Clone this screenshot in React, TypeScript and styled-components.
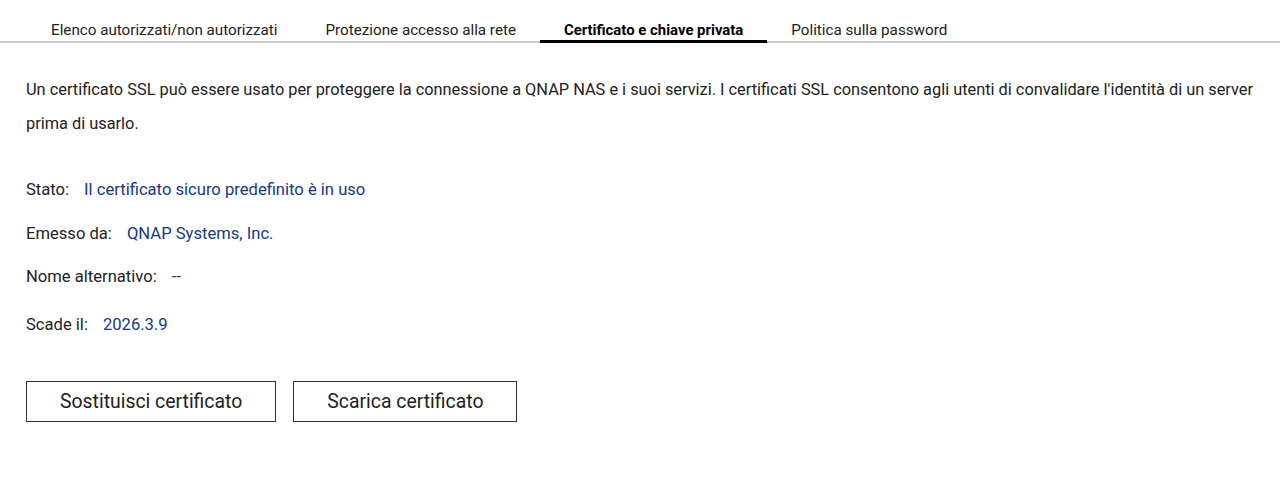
import React from "react";
import styled, { createGlobalStyle } from "styled-components";

const Global = createGlobalStyle`
  html, body { margin: 0; padding: 0; background: #fff; }
  body { font-family: Roboto, "Liberation Sans", Arial, sans-serif; color: #333; }
`;

const Page = styled.div`
  width: 1280px;
  height: 479px;
  background: #fff;
`;

const TabBar = styled.div`
  display: flex;
  padding-left: 27px;
  padding-top: 20px;
  border-bottom: 2px solid #c9c9c9;
  height: 21px;
`;

const Tab = styled.div<{ $active?: boolean }>`
  padding: 0 24px;
  font-size: ${(p) => (p.$active ? "14.9px" : "15.2px")};
  line-height: 20px;
  height: 21px;
  box-sizing: border-box;
  color: ${(p) => (p.$active ? "#000" : "#222")};
  font-weight: ${(p) => (p.$active ? 700 : 400)};
  position: relative;
  white-space: nowrap;
  &::after {
    content: "";
    display: ${(p) => (p.$active ? "block" : "none")};
    position: absolute;
    left: 0;
    right: 0;
    bottom: -2px;
    height: 3px;
    background: #000;
  }
`;

const Content = styled.div`
  padding: 30px 26px 0 26px;
`;

const Intro = styled.p`
  margin: 0;
  font-size: 16.35px;
  line-height: 34px;
  color: #222;
`;

const Info = styled.div`
  display: flex;
  flex-direction: column;
  margin-top: 39px;
`;

const Row = styled.div<{ $mt: number }>`
  display: flex;
  gap: 15px;
  font-size: 16.6px;
  line-height: 20px;
  margin-top: ${(p) => p.$mt}px;
`;

const Label = styled.span`
  color: #222;
`;

const Value = styled.span`
  color: #173787;
`;

const Buttons = styled.div`
  display: flex;
  gap: 17px;
  margin-top: 46px;
`;

const Button = styled.button`
  font-family: Roboto, "Liberation Sans", Arial, sans-serif;
  font-size: 19.4px;
  color: #222;
  background: #fff;
  border: 1px solid #333;
  height: 41px;
  padding: 0 33px;
  cursor: pointer;
`;

const tabs = [
  "Elenco autorizzati/non autorizzati",
  "Protezione accesso alla rete",
  "Certificato e chiave privata",
  "Politica sulla password",
];

const rows = [
  { label: "Stato:", value: "Il certificato sicuro predefinito è in uso", mt: 0 },
  { label: "Emesso da:", value: "QNAP Systems, Inc.", mt: 24 },
  { label: "Nome alternativo:", value: "--", mt: 23 },
  { label: "Scade il:", value: "2026.3.9", mt: 28 },
];

export default function App() {
  return (
    <Page>
      <Global />
      <TabBar>
        {tabs.map((t, i) => (
          <Tab key={t} $active={i === 2}>
            {t}
          </Tab>
        ))}
      </TabBar>
      <Content>
        <Intro>
          Un certificato SSL può essere usato per proteggere la connessione a QNAP NAS e i suoi servizi. I certificati SSL
          consentono agli utenti di convalidare l'identità di un server prima di usarlo.
        </Intro>
        <Info>
          {rows.map((r) => (
            <Row key={r.label} $mt={r.mt}>
              <Label>{r.label}</Label>
              <Value>{r.value}</Value>
            </Row>
          ))}
        </Info>
        <Buttons>
          <Button>Sostituisci certificato</Button>
          <Button>Scarica certificato</Button>
        </Buttons>
      </Content>
    </Page>
  );
}
